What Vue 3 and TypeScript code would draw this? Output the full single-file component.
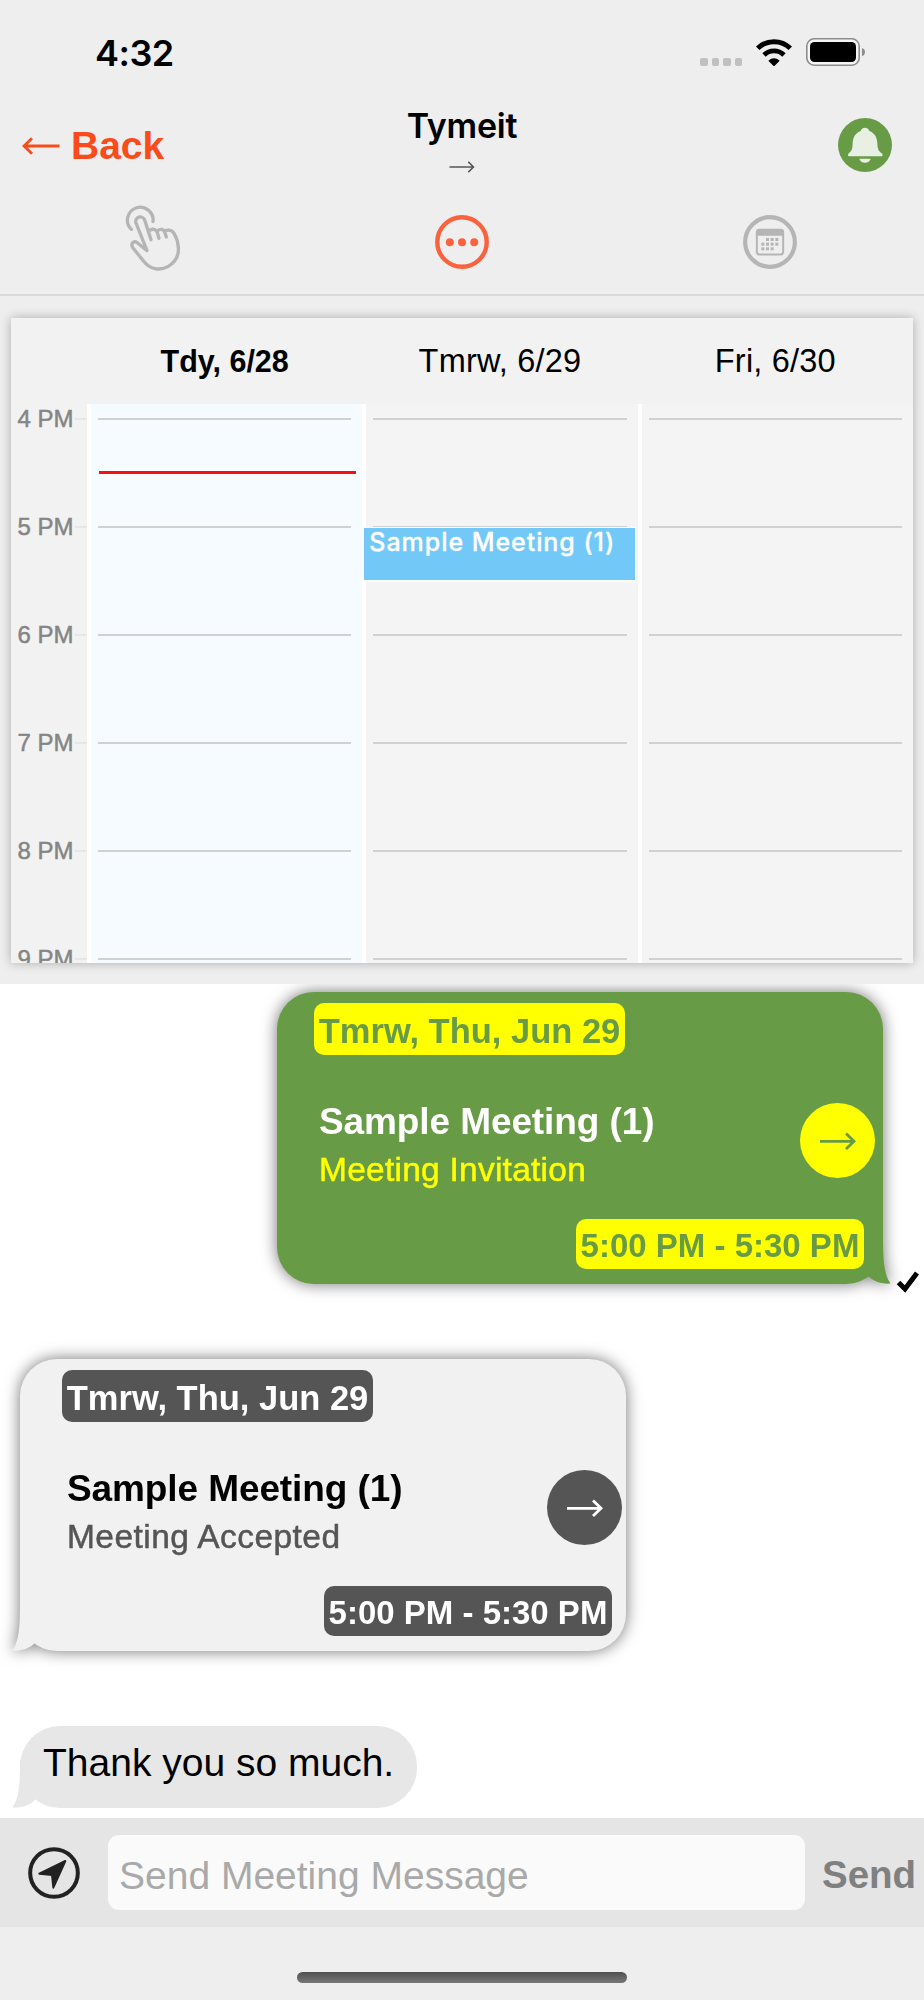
<script setup lang="ts">
import { ref } from 'vue'

interface Day {
  label: string
  today: boolean
}

interface MeetingMessage {
  side: 'sent' | 'received'
  date: string
  title: string
  status: string
  time: string
}

const days: Day[] = [
  { label: 'Tdy, 6/28', today: true },
  { label: 'Tmrw, 6/29', today: false },
  { label: 'Fri, 6/30', today: false },
]

const hours: string[] = ['4 PM', '5 PM', '6 PM', '7 PM', '8 PM', '9 PM']

const meetings: MeetingMessage[] = [
  {
    side: 'sent',
    date: 'Tmrw, Thu, Jun 29',
    title: 'Sample Meeting (1)',
    status: 'Meeting Invitation',
    time: '5:00 PM - 5:30 PM',
  },
  {
    side: 'received',
    date: 'Tmrw, Thu, Jun 29',
    title: 'Sample Meeting (1)',
    status: 'Meeting Accepted',
    time: '5:00 PM - 5:30 PM',
  },
]

const draft = ref('')
</script>

<template>
  <div class="screen">
    <div class="status">
      <span class="clock">4:32</span>
      <div class="signals">
        <div class="cell"><i v-for="n in 4" :key="n"></i></div>
        <svg class="wifi" viewBox="0 0 108 82" width="36" height="27.3">
          <path d="M5 28 A70 70 0 0 1 103 28" fill="none" stroke="#000" stroke-width="15" />
          <path d="M24 48 A43 43 0 0 1 84 48" fill="none" stroke="#000" stroke-width="14.5" />
          <path d="M37 65 Q54 51 71 65 L56 80 Q54 82 52 80 Z" fill="#000" />
        </svg>
        <svg class="battery" viewBox="0 0 60 28" width="60" height="28">
          <rect x="0.8" y="0.8" width="52.4" height="26.4" rx="7.5" fill="#f6f6f6" stroke="#8c8c8c" stroke-width="1.6" />
          <rect x="4" y="4" width="46" height="20" rx="4.5" fill="#000" />
          <path d="M56 10 Q59 11 59 14 Q59 17 56 18 Z" fill="#8c8c8c" />
        </svg>
      </div>
    </div>

    <div class="nav">
      <div class="back">
        <svg viewBox="0 0 38 18" width="38" height="18">
          <path d="M37.5 9 H2 M10 1.2 L2 9 L10 16.8" fill="none" stroke="#fa4b1b" stroke-width="2.9" />
        </svg>
        <span>Back</span>
      </div>
      <div class="title">
        <span>Tymeit</span>
        <svg viewBox="0 0 26 12" width="26" height="12">
          <path d="M0.5 6 H24.5 M19.3 0.9 L24.5 6 L19.3 11.1" fill="none" stroke="#555" stroke-width="1.5" />
        </svg>
      </div>
      <div class="alert">
        <svg viewBox="0 0 162 162" width="54" height="54">
          <circle cx="81" cy="81" r="81" fill="#679b45" />
          <path d="M81 29 C88 29 92 33 94 39 C110 45 117 58 118 75 C119 94 121 98 130 105 C136 110 134 115 130 115 H34 C29 115 28 110 33 105 C42 98 43 94 44 75 C45 58 52 45 68 39 C70 33 74 29 81 29 Z M64 122 H98 C96 130 89 134 81 134 C73 134 66 130 64 122 Z" fill="#e8f0e3" />
        </svg>
      </div>
    </div>

    <div class="tabs">
      <svg class="tap" viewBox="375 610 174 204" width="58" height="68">
        <g fill="none" stroke="#b5b5b5" stroke-width="10" stroke-linecap="round" stroke-linejoin="round">
          <path d="M397 686 A38.5 38.5 0 1 1 462 663" />
          <path d="M456 717 L437 658 A13.5 13.5 0 0 0 411 667 L444 750 L415 726 C403 718 394 730 402 742 L436 784 C456 808 485 810 508 797 C531 783 540 764 538 740 C537 722 531 708 525 698 C519 688 508 687 498 690" />
          <path d="M450 690 C461 682 472 686 475 696 L480 713" />
          <path d="M475 690 C486 683 494 686 497 694 L502 709" />
        </g>
      </svg>
      <svg class="round" viewBox="0 0 54 54" width="54" height="54">
        <circle cx="27" cy="27" r="24.7" fill="none" stroke="#fa623d" stroke-width="4.4" />
        <circle v-for="x in [14.8, 27, 39.2]" :key="x" :cx="x" cy="27.3" r="4" fill="#fa623d" />
      </svg>
      <svg class="round" viewBox="0 0 162 162" width="54" height="54">
        <circle cx="81" cy="81" r="74.5" fill="none" stroke="#b5b5b5" stroke-width="12.5" />
        <rect x="41.5" y="44.500" width="79" height="74" rx="8" fill="none" stroke="#b5b5b5" stroke-width="6" />
        <path d="M40 62 V50 Q40 43 48 43 H114 Q122 43 122 50 V62 Z" fill="#b5b5b5" />
        <g fill="#b5b5b5">
          <rect v-for="x in [69, 83, 97]" :key="'a' + x" :x="x" y="69" width="9" height="9" />
          <rect v-for="x in [55, 69, 83, 97]" :key="'b' + x" :x="x" y="83" width="9" height="9" />
          <rect v-for="x in [55, 69, 83]" :key="'c' + x" :x="x" y="97" width="9" height="9" />
        </g>
      </svg>
    </div>

    <div class="planner">
      <div class="card">
        <div class="card-head">
          <span></span>
          <span v-for="d in days" :key="d.label" class="day-name" :class="{ today: d.today }">{{ d.label }}</span>
        </div>
        <div class="card-body">
          <div class="times">
            <div v-for="h in hours" :key="h" class="time"><span>{{ h }}</span><i></i></div>
          </div>
          <div v-for="(d, i) in days" :key="d.label" class="day" :class="{ today: d.today }">
            <div v-for="h in hours" :key="h" class="hour"></div>
            <div v-if="d.today" class="now"></div>
            <div v-if="i === 1" class="event">Sample Meeting (1)</div>
          </div>
        </div>
      </div>
    </div>

    <div class="messages">
      <div v-for="m in meetings" :key="m.side" class="row" :class="m.side">
        <div class="bubble meeting">
          <svg class="tail" viewBox="0 0 26 48" width="26" height="48">
            <path d="M18 0 C18 24 19 38 25.500 47.600 C16 48.300 8 45 2.500 39.500 L2.500 0 Z" fill="currentColor" />
          </svg>
          <span class="chip date">{{ m.date }}</span>
          <div class="main">
            <div class="texts">
              <div class="name">{{ m.title }}</div>
              <div class="state">{{ m.status }}</div>
            </div>
            <div class="go">
              <svg viewBox="0 0 36 18" width="36" height="18">
                <path d="M0 9.300 H34 M26 1.500 L34 9.300 L26 17" fill="none" stroke="currentColor" stroke-width="2.8" />
              </svg>
            </div>
          </div>
          <span class="chip slot">{{ m.time }}</span>
        </div>
        <svg v-if="m.side === 'sent'" class="check" viewBox="0 0 24 23" width="24" height="23">
          <path d="M2.500 12.500 L9 19 L21 3" fill="none" stroke="#000" stroke-width="5" stroke-linejoin="miter" />
        </svg>
      </div>
      <div class="row received">
        <div class="bubble plain">
          <svg class="tail" viewBox="0 0 26 48" width="26" height="48">
            <path d="M18 0 C18 24 19 38 25.500 47.600 C16 48.300 8 45 2.500 39.500 L2.500 0 Z" fill="currentColor" />
          </svg>
          <span>Thank you so much.</span>
        </div>
      </div>
    </div>

    <div class="composer">
      <svg viewBox="0 0 156 156" width="52" height="52">
        <circle cx="78" cy="78" r="71.500" fill="none" stroke="#222" stroke-width="12" />
        <path d="M112 42 L76 122 L72 84 L34 80 Z" fill="#222" stroke="#222" stroke-width="6" stroke-linejoin="round" />
      </svg>
      <input v-model="draft" type="text" placeholder="Send Meeting Message" />
      <button type="button">Send</button>
    </div>

    <div class="home"><div class="indicator"></div></div>
  </div>
</template>

<style>
html,
body {
  margin: 0;
  background: #eee;
}
</style>

<style scoped>
.screen {
  width: 924px;
  height: 2000px;
  overflow: hidden;
  background: #eee;
  font-family: 'Liberation Sans', Arial, sans-serif;
  color: #000;
  white-space: nowrap;
}
svg {
  display: block;
  flex: none;
}
.status {
  display: flex;
  justify-content: space-between;
  align-items: center;
  height: 106px;
  padding: 0 58px 0 95px;
  box-sizing: border-box;
}
.clock {
  font: 600 36px/40px Inter, sans-serif;
  letter-spacing: -0.5px;
}
.signals {
  display: flex;
  align-items: center;
}
.cell {
  display: flex;
  gap: 4px;
  margin: 18px 14px 0 0;
}
.cell i {
  width: 7.5px;
  height: 8px;
  border-radius: 2px;
  background: #c0c0c0;
}
.battery {
  margin: -2px 0 0 14px;
}
.nav {
  display: grid;
  grid-template-columns: 1fr 1fr 1fr;
  height: 78px;
}
.back {
  display: flex;
  align-items: center;
  gap: 11px;
  padding-left: 22px;
  color: #fa4b1b;
  font-size: 39px;
  font-weight: 700;
  line-height: 79px;
}
.title {
  display: flex;
  flex-direction: column;
  align-items: center;
  gap: 15px;
  font: 600 34px/40px Inter, sans-serif;
  letter-spacing: -0.2px;
}
.alert {
  display: flex;
  justify-content: flex-end;
  padding: 12px 32px 0 0;
}
.tabs {
  display: grid;
  grid-template-columns: 1fr 1fr 1fr;
  justify-items: center;
  align-items: start;
  height: 112px;
  padding-top: 19px;
  box-sizing: border-box;
  border-bottom: 2px solid #d9d9d9;
}
.tap {
  margin: 1px 2px 0 0;
}
.round {
  margin-top: 12px;
}
.planner {
  height: 688px;
  padding: 22px 11px 0;
  box-sizing: border-box;
}
.card {
  height: 645px;
  overflow: hidden;
  background: #f2f2f2;
  box-shadow: 0 0 10px rgba(0, 0, 0, 0.28);
}
.card-head,
.card-body {
  display: grid;
  grid-template-columns: 76px repeat(3, 1fr);
}
.card-head {
  height: 86px;
  line-height: 87px;
  text-align: center;
  font-size: 32.5px;
}
.day-name {
  letter-spacing: 0.2px;
}
.day-name.today {
  font-size: 30.5px;
  font-weight: 700;
  letter-spacing: 0;
}
.card-body {
  height: 559px;
}
.times {
  padding-top: 3px;
}
.time {
  display: flex;
  align-items: center;
  height: 24px;
  margin-bottom: 84px;
  padding-left: 6.500px;
  color: #858585;
  font-size: 24px;
  -webkit-text-stroke: 0.5px #858585;
}
.time i {
  flex: 1;
  height: 2px;
  margin-left: 1px;
  background: #e6e6e6;
}
.day {
  position: relative;
  height: 545px;
  padding: 14px 11px 0 7px;
  border-left: 4px solid #fff;
  background: #f4f4f4;
}
.day.today {
  background: #f6fbff;
}
.hour {
  height: 106px;
  border-top: 2px solid #d0d2d2;
}
.hour:nth-child(6) {
  height: 10px;
}
.now {
  position: absolute;
  top: 67px;
  left: 8px;
  width: 257px;
  height: 3px;
  background: #fb0d10;
}
.event {
  position: absolute;
  top: 123px;
  left: -2px;
  width: 272px;
  height: 55px;
  box-sizing: border-box;
  padding-left: 5px;
  border: 1px solid #fafafa;
  border-left: 0;
  border-bottom-width: 2px;
  background: #72c9f7;
  color: #fff;
  font: 500 25px/28px Inter, sans-serif;
  letter-spacing: 0.95px;
  -webkit-text-stroke: 0.3px #fff;
}
.messages {
  display: flex;
  flex-direction: column;
  gap: 75px;
  height: 834px;
  padding-top: 8px;
  box-sizing: border-box;
  overflow: hidden;
  background: #fff;
}
.row {
  display: flex;
  align-items: flex-end;
}
.row.sent {
  justify-content: flex-end;
  padding-right: 4px;
}
.row.received {
  padding-left: 20px;
}
.bubble {
  position: relative;
}
.tail {
  position: absolute;
  right: -8px;
  bottom: 0;
}
.received .tail {
  right: auto;
  left: -8px;
  transform: scaleX(-1);
}
.meeting {
  display: flex;
  flex-direction: column;
  align-items: flex-start;
  width: 606px;
  height: 292px;
  padding-top: 11px;
  box-sizing: border-box;
  border-radius: 37px;
  filter: drop-shadow(0 0 8px rgba(0, 0, 0, 0.55));
}
.sent .meeting {
  background: #679b45;
  color: #679b45;
}
.received .meeting {
  background: #f1f1f1;
  color: #f1f1f1;
}
.chip {
  border-radius: 10px;
  font-weight: 700;
  text-align: center;
}
.sent .chip,
.sent .go {
  background: #ff0;
  color: #679b45;
}
.received .chip,
.received .go {
  background: #555;
  color: #fff;
}
.date {
  width: 311px;
  height: 52px;
  margin-left: 37px;
  font-size: 34.5px;
  line-height: 56px;
}
.received .date {
  margin-left: 42px;
}
.main {
  display: flex;
  justify-content: space-between;
  align-items: center;
  align-self: stretch;
  height: 94px;
  margin-top: 43px;
  padding: 0 8px 0 42px;
}
.received .main {
  padding: 0 4px 0 47px;
}
.name {
  height: 46px;
  color: #fff;
  font-size: 37px;
  font-weight: 700;
  line-height: 48px;
  letter-spacing: -0.1px;
}
.received .name {
  color: #000;
}
.state {
  height: 48px;
  color: #ff0;
  font-size: 33.5px;
  line-height: 52px;
  letter-spacing: 0.25px;
  -webkit-text-stroke: 0.5px currentColor;
}
.received .state {
  color: #555;
  letter-spacing: 0.45px;
}
.go {
  display: flex;
  justify-content: center;
  align-items: center;
  width: 75px;
  height: 75px;
  margin-bottom: 9px;
  border-radius: 50%;
}
.slot {
  align-self: flex-end;
  width: 288px;
  height: 50px;
  margin: 27px 19px 0 0;
  font-size: 33px;
  line-height: 54px;
}
.received .slot {
  margin-right: 14px;
}
.check {
  margin: 0 0 -9px 13px;
}
.plain {
  height: 82px;
  padding: 0 23px 0 23px;
  border-radius: 40px;
  background: #e7e7e7;
  color: #e7e7e7;
}
.plain span {
  color: #000;
  font-size: 39px;
  line-height: 73px;
}
.composer {
  display: flex;
  align-items: center;
  height: 109px;
  padding-left: 28px;
  background: #e5e5e5;
}
.composer input {
  width: 697px;
  height: 75px;
  margin: 0 0 0 28px;
  padding: 7px 10px 0 11px;
  box-sizing: border-box;
  border: 0;
  border-radius: 11px;
  outline: 0;
  background: #fafafa;
  font: 39px 'Liberation Sans', Arial, sans-serif;
}
.composer input::placeholder {
  color: #a9a9a9;
  opacity: 1;
}
.composer button {
  margin: 0 0 0 17px;
  padding: 5px 0 0;
  border: 0;
  background: none;
  color: #808080;
  font: 700 38.5px 'Liberation Sans', Arial, sans-serif;
}
.home {
  display: flex;
  justify-content: center;
  padding-top: 45px;
}
.indicator {
  width: 330px;
  height: 11px;
  border-radius: 6px;
  background: linear-gradient(#4f514f, #777);
}
</style>
